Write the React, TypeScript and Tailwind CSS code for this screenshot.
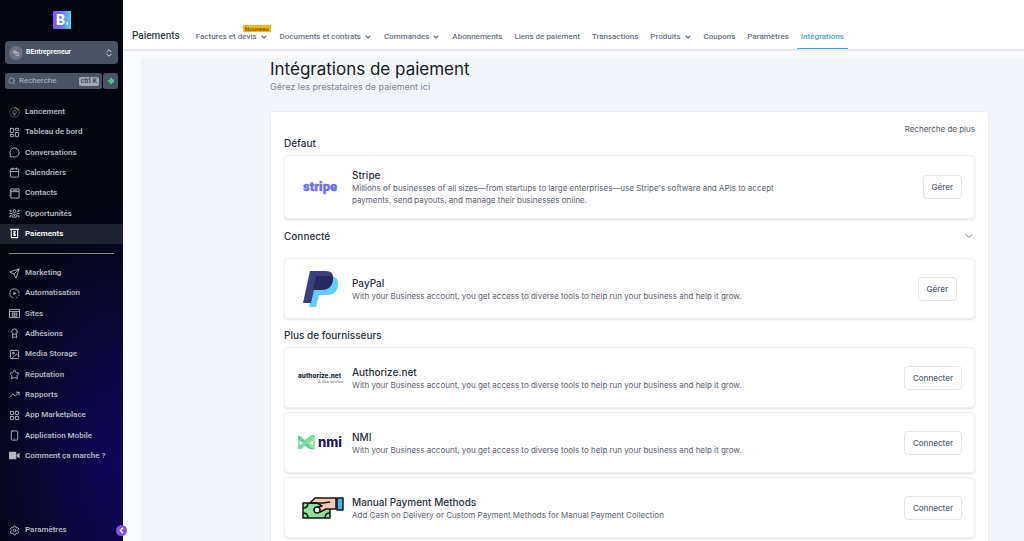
import {
  Calendar,
  ChevronDown,
  ChevronLeft,
  ChevronsUpDown,
  Image,
  LayoutDashboard,
  LayoutGrid,
  MessageCircle,
  Award,
  Search,
  Send,
  Settings,
  Smartphone,
  Star,
  TrendingUp,
} from "lucide-react";
import type { ReactNode } from "react";

const iconClass = "size-[11px] shrink-0";

const LaunchIcon = () => (
  <svg viewBox="0 0 24 24" className={iconClass} fill="none">
    <circle cx="12" cy="12" r="10.5" stroke="#5b5f69" strokeWidth="1.5" />
    <path d="M12 1.5A10.5 10.5 0 0 1 21.500 8" stroke="#c98a4b" strokeWidth="2" />
    <path d="M12 6c3 2 4 4.500 3.500 8h-7C8 10.500 9 8 12 6zM10 17h4M12 17v3" stroke="#8d919b" strokeWidth="1.5" />
  </svg>
);

const ContactsIcon = () => (
  <svg viewBox="0 0 24 24" className={iconClass} fill="none" stroke="currentColor" strokeWidth="2">
    <path d="M4 2h18v20H4zM4 8h18M8 5h10" />
    <path d="M1 6h4M1 11h4M1 16h4" />
  </svg>
);

const OpportunityIcon = () => (
  <svg viewBox="0 0 24 24" className={iconClass} fill="none" stroke="currentColor" strokeWidth="2">
    <circle cx="12" cy="7" r="3" />
    <path d="M8 20v-4l2-3h4l2 3v4zM12 15v3" />
    <circle cx="3" cy="6" r="1.5" />
    <circle cx="21" cy="6" r="1.5" />
    <circle cx="3" cy="18" r="1.5" />
    <circle cx="21" cy="18" r="1.5" />
    <path d="M1 12h6M17 12h6M4 7l3 3M20 7l-3 3M4 17l3-3M20 17l-3-3" />
  </svg>
);

const PaymentIcon = () => (
  <svg viewBox="0 0 24 24" className={iconClass} fill="none" stroke="currentColor" strokeWidth="2.2">
    <path d="M2 3h20M5 3v18h14V3M9 7h6" />
    <path d="M14.500 10.500h-3a1.500 1.500 0 0 0 0 3h1a1.500 1.500 0 0 1 0 3h-3M12 9v9" />
  </svg>
);

const AutomationIcon = () => (
  <svg viewBox="0 0 24 24" className={iconClass} fill="none" stroke="currentColor" strokeWidth="2">
    <path d="M9 21.500A10 10 0 1 1 22 12" />
    <path d="M22 15a10 10 0 0 1-9 7" strokeDasharray="3 3" />
    <path d="M9.500 8v8l6.500-4z" fill="currentColor" stroke="none" />
  </svg>
);

const SitesIcon = () => (
  <svg viewBox="0 0 24 24" className={iconClass} fill="none" stroke="currentColor" strokeWidth="2">
    <path d="M1 3h22v18H1zM1 7.500h22" />
    <rect x="7" y="11" width="10" height="7" />
    <circle cx="12" cy="14.5" r="1.5" fill="currentColor" />
  </svg>
);

const VideoIcon = () => (
  <svg viewBox="0 0 24 24" className={iconClass} fill="currentColor">
    <rect x="0" y="4" width="16" height="16" rx="2" />
    <path d="M17 10l6-4v12l-6-4z" />
  </svg>
);

const mainLinks = [
  { label: "Lancement", icon: <LaunchIcon /> },
  { label: "Tableau de bord", icon: <LayoutDashboard className={iconClass} /> },
  { label: "Conversations", icon: <MessageCircle className={iconClass} /> },
  { label: "Calendriers", icon: <Calendar className={iconClass} /> },
  { label: "Contacts", icon: <ContactsIcon /> },
  { label: "Opportunités", icon: <OpportunityIcon /> },
  { label: "Paiements", icon: <PaymentIcon />, active: true },
];

const moreLinks = [
  { label: "Marketing", icon: <Send className={iconClass} /> },
  { label: "Automatisation", icon: <AutomationIcon /> },
  { label: "Sites", icon: <SitesIcon /> },
  { label: "Adhésions", icon: <Award className={iconClass} /> },
  { label: "Media Storage", icon: <Image className={iconClass} /> },
  { label: "Réputation", icon: <Star className={iconClass} /> },
  { label: "Rapports", icon: <TrendingUp className={iconClass} /> },
  { label: "App Marketplace", icon: <LayoutGrid className={iconClass} /> },
  { label: "Application Mobile", icon: <Smartphone className={iconClass} /> },
  { label: "Comment ça marche ?", icon: <VideoIcon /> },
];

const tabs = [
  { label: "Factures et devis", menu: true, badge: "Nouveau" },
  { label: "Documents et contrats", menu: true },
  { label: "Commandes", menu: true },
  { label: "Abonnements" },
  { label: "Liens de paiement" },
  { label: "Transactions" },
  { label: "Produits", menu: true },
  { label: "Coupons" },
  { label: "Paramètres" },
  { label: "Intégrations", active: true },
];

function SideLink({ label, icon, active }: { label: string; icon: ReactNode; active?: boolean }) {
  return (
    <a
      href="#"
      className={`flex h-5 items-center gap-[5px] pl-[9px] text-[8px] font-semibold ${
        active ? "bg-[#1c232e] text-white" : "text-[#b4b7c0]"
      }`}
    >
      {icon}
      {label}
    </a>
  );
}

function Sidebar() {
  return (
    <aside className="relative flex w-[123px] shrink-0 flex-col bg-[#03060f] bg-[radial-gradient(ellipse_120%_50%_at_100%_86%,#10075c_0%,#0b0640_40%,transparent_100%)] font-[Roboto,sans-serif]">
      <div className="flex justify-center pt-[11px]">
        <svg viewBox="0 0 18 18" className="size-[18px]">
          <defs>
            <linearGradient id="brand" x1="0" x2="1">
              <stop offset="0" stopColor="#8a4dff" />
              <stop offset="0.5" stopColor="#6a7af2" />
              <stop offset="1" stopColor="#55d6e8" />
            </linearGradient>
          </defs>
          <rect width="18" height="18" fill="url(#brand)" />
          <text x="3" y="14" fill="#fff" fontSize="14" fontWeight="900" fontFamily="Roboto, sans-serif">
            B
          </text>
          <path d="M13.500 11h1.500v3h-1.500z" fill="#c9f4fa" />
        </svg>
      </div>

      <button className="mx-[5px] mt-3 flex h-[23px] items-center rounded-[4px] bg-[#4a5361] px-1 text-[7px] font-semibold text-white">
        <span className="mr-[3px] flex size-[14px] items-center justify-center rounded-full bg-[#6d7380]">
          <svg viewBox="0 0 12 12" className="size-2" fill="none" stroke="#d6d8dd">
            <path d="M2 3h4v3H2zM6 5l4 1v4H6z" />
          </svg>
        </span>
        <span className="flex-1 text-left">BEntrepreneur</span>
        <ChevronsUpDown className="size-[10px]" />
      </button>

      <div className="mx-[5px] mt-[9px] flex h-4 gap-px">
        <label className="flex min-w-0 flex-1 items-center gap-[3px] rounded-[3px] bg-[#4a5361] px-[3px] text-[#b5bac4]">
          <Search className="size-2 shrink-0" />
          <input
            type="text"
            aria-label="Recherche"
            placeholder="Recherche"
            className="w-full min-w-0 text-[8px] outline-none placeholder:text-[#b5bac4]"
          />
          <kbd className="shrink-0 rounded-[2px] bg-[#a3a8b2] px-[2px] font-[Roboto,sans-serif] text-[7px] leading-[9px] font-medium text-[#39404c]">
            ctrl K
          </kbd>
        </label>
        <button aria-label="Ajouter" className="flex w-[15px] items-center justify-center rounded-[3px] bg-[#4a5361]">
          <svg viewBox="0 0 8 8" className="size-2" fill="#4cc38a">
            <path d="M3 1h2v1.500l2-.5v4l-2-.5V7H3V5.500L1 5V3l2-.5z" />
          </svg>
        </button>
      </div>

      <nav className="mt-[13px] flex h-[142px] flex-col justify-between">
        {mainLinks.map((link) => (
          <SideLink key={link.label} {...link} />
        ))}
      </nav>
      <hr className="mx-[9px] mt-[9px] border-[#8b8778]" />
      <nav className="mt-[9px] flex h-[203px] flex-col justify-between">
        {moreLinks.map((link) => (
          <SideLink key={link.label} {...link} />
        ))}
      </nav>
      <div className="mt-auto pb-px">
        <SideLink label="Paramètres" icon={<Settings className={iconClass} />} />
      </div>

      <button
        aria-label="Réduire le menu"
        className="absolute -right-1 bottom-[5px] z-10 flex size-[11px] items-center justify-center rounded-full bg-[#8450f5] text-white"
      >
        <ChevronLeft className="size-[9px]" strokeWidth={4} />
      </button>
    </aside>
  );
}

function TopBar() {
  return (
    <header className="flex h-[51px] shrink-0 items-end border-b-2 border-[#e9eaec] bg-white pl-[9px] font-[Roboto,sans-serif]">
      <h2 className="mr-4 pb-[6px] text-[10px] leading-[14px] font-medium text-[#3a4350]">Paiements</h2>
      <nav className="flex gap-3 text-[8px] font-medium text-[#6a7380]">
        {tabs.map((tab) => (
          <a
            key={tab.label}
            href="#"
            className={`relative flex h-[22px] items-center gap-[3px] pb-[2px] whitespace-nowrap ${
              tab.active ? "-mx-1 border-b border-[#41a9e0] px-1 text-[#41a9e0]" : ""
            }`}
          >
            {tab.label}
            {tab.menu && <ChevronDown className="size-2" strokeWidth={3.5} />}
            {tab.badge && (
              <span className="absolute -top-[2px] -right-[3px] rounded-[1px] bg-[#f5b516] px-[2px] text-[6px] leading-[7px] text-[#6b4a08]">
                {tab.badge}
              </span>
            )}
          </a>
        ))}
      </nav>
    </header>
  );
}

const StripeLogo = () => (
  <svg viewBox="0 0 36 16" className="h-4 w-9 overflow-visible">
    <text
      x="0"
      y="12"
      fill="#6c6ff0"
      stroke="#6c6ff0"
      strokeWidth="0.3"
      fontSize="13"
      fontWeight="900"
      fontFamily="Roboto, sans-serif"
    >
      stripe
    </text>
  </svg>
);

const PaypalLogo = () => (
  <svg viewBox="0 0 36 38" className="-my-1 h-[38px] w-9">
    <path d="M12 6h16c6 1 8 5 7 10-1 6-5 9-11 9h-8l-3 12H6z" fill="#60cdff" />
    <path d="M7 1h16c6 0 8 4 7 9-1 7-5 10-12 10h-7L8 33H0z" fill="#3a3f7d" />
    <path d="M13 6h13c3 0 4 1 4 3-1 7-5 11-12 11h-8z" fill="#242a60" />
  </svg>
);

const AuthorizeLogo = () => (
  <svg viewBox="0 0 50 15" className="h-[14px] w-[46px] overflow-visible">
    <text x="0" y="8" fill="#17293d" fontSize="7" fontWeight="800" fontFamily="Inter, sans-serif">
      authorize.net
    </text>
    <text x="49" y="13" fill="#6b7280" fontSize="4" textAnchor="end" fontFamily="Roboto, sans-serif">
      A Visa Solution
    </text>
  </svg>
);

const NmiLogo = () => (
  <svg viewBox="0 0 46 16" className="h-4 w-[46px] overflow-visible">
    <path d="M0 2q0-2 2-1l6 5 6-5q3-1 3 1v11q0 3-3 1L8 10l-5 4q-3 1-3-1z" fill="#9be79b" />
    <path d="M0 2q0-2 2-1l13 13q-3 1-5-1L0 4z" fill="#57cf9d" />
    <path d="M0 11 12 1q3-2 5 0L3 14q-3 1-3-1z" fill="#73dca0" />
    <path d="M5 8l-3-2v4zM12 8l3-2v4z" fill="#fff" />
    <text x="20" y="12" fill="#211663" fontSize="13" fontWeight="800" fontFamily="Inter, sans-serif">
      nmi
    </text>
  </svg>
);

const CashLogo = () => (
  <svg viewBox="0 0 42 22" className="ml-1 h-[22px] w-[42px]" stroke="#161616" strokeWidth="1.5" strokeLinejoin="round">
    <path d="M1 6h27v15H1z" fill="#8be39a" />
    <path d="M1 11q5 0 5-5M1 16q5 0 5 5M28 16q-5 0-5 5" fill="none" />
    <path d="M8 6l5-5h21v11H24l-6 3-5-4 7-2-5-3z" fill="#f5c9b4" />
    <path d="M8 6h13l7-1" fill="none" />
    <circle cx="15" cy="13" r="3" fill="#fff" />
    <path d="M35 1h6v12h-6z" fill="#3fb4e8" />
  </svg>
);

type Provider = {
  name: string;
  description: string;
  logo: ReactNode;
  action: string;
  connected?: boolean;
};

const businessText =
  "With your Business account, you get access to diverse tools to help run your business and help it grow.";

const moreProviders: Provider[] = [
  { name: "Authorize.net", description: businessText, logo: <AuthorizeLogo />, action: "Connecter" },
  { name: "NMI", description: businessText, logo: <NmiLogo />, action: "Connecter" },
  {
    name: "Manual Payment Methods",
    description: "Add Cash on Delivery or Custom Payment Methods for Manual Payment Collection",
    logo: <CashLogo />,
    action: "Connecter",
  },
];

function ProviderCard({ name, description, logo, action, connected }: Provider) {
  return (
    <article
      className={`flex min-h-[61px] items-center rounded-[4px] border border-[#eeeff2] bg-white py-3 pl-[13px] shadow-[0_1px_2px_rgba(16,24,40,0.12)] ${
        connected ? "pr-[17px]" : "pr-3"
      }`}
    >
      <div className="flex w-[46px] shrink-0 justify-center">{logo}</div>
      <div className="ml-2 flex-1">
        <h3 className="text-[10px] leading-[14px] font-medium text-[#2b323d]">{name}</h3>
        <p className="max-w-[430px] text-[8px] leading-3 text-[#5a616d]">{description}</p>
      </div>
      <button className="h-6 rounded-[4px] border border-[#e2e4ea] bg-white px-2 text-[8px] font-medium text-[#566072]">
        {action}
      </button>
    </article>
  );
}

export default function App() {
  return (
    <div className="flex h-screen bg-[#fafbfe]">
      <Sidebar />
      <div className="flex min-w-0 flex-1 flex-col">
        <TopBar />
        <main className="mt-[7px] ml-[18px] flex-1 overflow-y-auto bg-[#f2f6fa] pr-[35px] pl-[129px] font-[Inter,sans-serif] [scrollbar-width:none]">
          <h1 className="text-[17px] leading-[23px] text-[#171c24]">Intégrations de paiement</h1>
          <p className="text-[9px] leading-3 text-[#7c8592]">Gérez les prestataires de paiement ici</p>

          <div className="mt-[18px] rounded-[4px] border border-[#e9edf2] bg-white px-[13px] pb-4">
            <div className="flex justify-end pt-[11px]">
              <a href="#" className="text-[8px] leading-3 text-[#535a66]">
                Recherche de plus
              </a>
            </div>

            <h2 className="mt-px mb-[5px] text-[10px] leading-[14px] font-medium text-[#2b323d]">Défaut</h2>
            <ProviderCard
              name="Stripe"
              description="Millions of businesses of all sizes—from startups to large enterprises—use Stripe's software and APIs to accept payments, send payouts, and manage their businesses online."
              logo={<StripeLogo />}
              action="Gérer"
            />

            <div className="mt-[10px] mb-[15px] flex items-center justify-between">
              <h2 className="text-[10px] leading-[14px] font-medium text-[#2b323d]">Connecté</h2>
              <button aria-label="Afficher les fournisseurs connectés" className="text-[#7b8290]">
                <ChevronDown className="size-3" />
              </button>
            </div>
            <ProviderCard name="PayPal" description={businessText} logo={<PaypalLogo />} action="Gérer" connected />

            <h2 className="mt-[9px] mb-[5px] text-[10px] leading-[14px] font-medium text-[#2b323d]">
              Plus de fournisseurs
            </h2>
            <div className="flex flex-col gap-1">
              {moreProviders.map((provider) => (
                <ProviderCard key={provider.name} {...provider} />
              ))}
            </div>
          </div>
        </main>
      </div>
    </div>
  );
}
